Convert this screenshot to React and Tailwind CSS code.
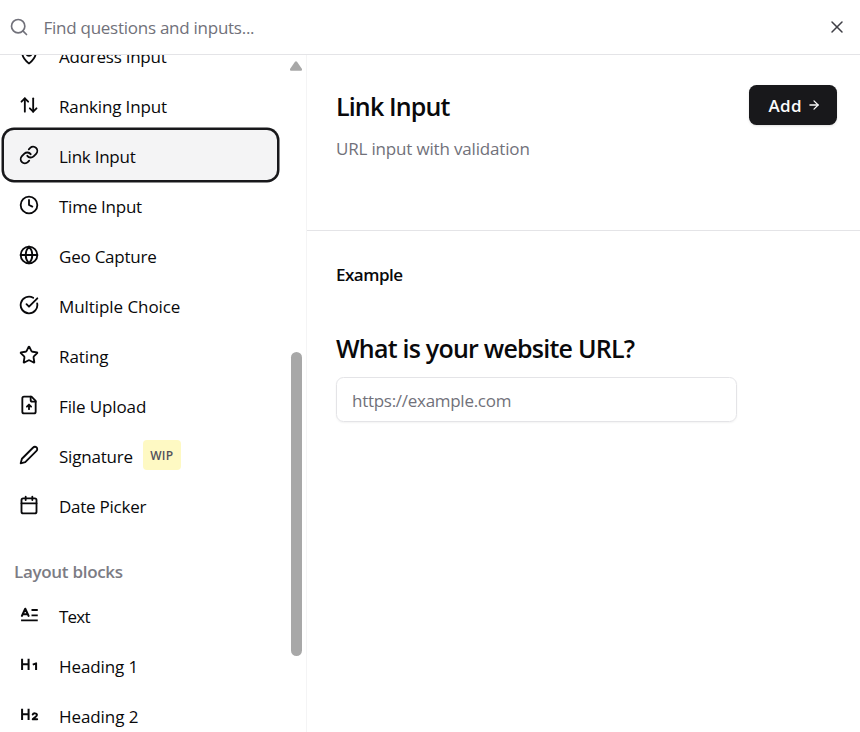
import React from "react";
import { ArrowRight, ArrowUpDown, Calendar, CircleCheckBig, Clock, Globe, Link, MapPin, Search, Star, X } from "lucide-react";

const Svg = ({ children, className, strokeWidth = 2.2 }) => (
  <svg viewBox="0 0 24 24" fill="none" stroke="currentColor" strokeWidth={strokeWidth} strokeLinecap="round" strokeLinejoin="round" className={className}>
    {children}
  </svg>
);

const FileUpIcon = ({ className }) => (
  <Svg className={className}>
    <path d="M15 2H6a2 2 0 0 0-2 2v16a2 2 0 0 0 2 2h12a2 2 0 0 0 2-2V7Z" />
    <path d="M14 2v4a2 2 0 0 0 2 2h4" />
    <path d="M12 17v-5M9.5 14 12 11.5l2.500 2.500" />
  </Svg>
);

const PencilIcon = ({ className }) => (
  <Svg className={className}>
    <path d="M17 3a2.830 2.830 0 1 1 4 4L7.500 20.500 2 22l1.500-5.500Z" />
  </Svg>
);

const TextIcon = ({ className }) => (
  <Svg className={className} strokeWidth={2.5}>
    <path d="m3.500 13 4-8.500 4 8.500M5 11h5" />
    <path strokeLinecap="butt" strokeWidth="2.200" d="M15 6H22.500M15 12.500H22.500M2.500 18.500h20" />
  </Svg>
);

const HeadingIcon = ({ className, children }) => (
  <Svg className={className} strokeWidth={2.4}>
    <path strokeLinecap="butt" d="M3.700 4.500v13.500M11.500 4.500v13.500M3.700 11.200h8" />
    {children}
  </Svg>
);

const H1Icon = ({ className }) => (
  <HeadingIcon className={className}>
    <path strokeLinecap="butt" d="m16.500 11.500 4-1.500V18" />
  </HeadingIcon>
);

const H2Icon = ({ className }) => (
  <HeadingIcon className={className}>
    <path d="M16.500 11.500c.6-2 5-2 5 .4 0 1.800-3 3-5 5.100h5.300" />
  </HeadingIcon>
);

const INPUTS = [
  { label: "Address Input", Icon: MapPin, text: "tracking-[-0.25px]" },
  { label: "Ranking Input", Icon: ArrowUpDown, text: "tracking-[-0.13px]" },
  { label: "Link Input", Icon: Link, text: "tracking-[-0.25px]", selected: true },
  { label: "Time Input", Icon: Clock, text: "tracking-[-0.25px]" },
  { label: "Geo Capture", Icon: Globe, text: "tracking-[-0.23px]" },
  { label: "Multiple Choice", Icon: CircleCheckBig, text: "tracking-[-0.07px]" },
  { label: "Rating", Icon: Star, text: "tracking-[-0.1px]" },
  { label: "File Upload", Icon: FileUpIcon, text: "tracking-[-0.12px]" },
  { label: "Signature", Icon: PencilIcon, text: "tracking-[-0.21px]", badge: "WIP" },
  { label: "Date Picker", Icon: Calendar, text: "tracking-[-0.25px]" },
];

const LAYOUT_BLOCKS = [
  { label: "Text", Icon: TextIcon, text: "tracking-[-0.8px]" },
  { label: "Heading 1", Icon: H1Icon, text: "tracking-[-0.1px]" },
  { label: "Heading 2", Icon: H2Icon, text: "tracking-[-0.08px]" },
];

const BlockItem = ({ label, Icon, text, badge, selected }) => (
  <li
    className={`flex h-[50px] items-center rounded-[10px] pl-[15px] ${
      selected ? "bg-[#f4f4f5] ring-[2.500px] ring-[#18181b]" : ""
    }`}
  >
    <Icon className="h-5 w-5 shrink-0" strokeWidth={2.2} />
    <span className={`ml-5 whitespace-nowrap pt-1 text-[17px] ${text}`}>{label}</span>
    {badge ? (
      <span className="ml-2.5 grid h-[30px] w-[38px] place-items-center rounded bg-[#fef9c3] pt-[2px] text-[12px] font-semibold tracking-[0.2px] text-[#52525b]">{badge}</span>
    ) : null}
  </li>
);

const App = () => (
  <div className="flex h-[732px] w-[860px] flex-col overflow-hidden bg-white font-['Open_Sans','Noto_Sans',sans-serif] text-[#09090b]">
    <header className="flex h-[55px] shrink-0 items-center border-b border-[#e4e4e7] pl-[8.500px] pr-[13.500px]">
      <Search className="h-5 w-5 text-[#71717a]" strokeWidth={2} />
      <input
        placeholder="Find questions and inputs..."
        className="ml-[15px] flex-1 pt-[2px] text-[17px] tracking-[-0.26px] outline-none placeholder:text-[#71717a]"
      />
      <button type="button" aria-label="Close">
        <X className="h-5 w-5 text-[#3f3f46]" strokeWidth={1.8} />
      </button>
    </header>

    <div className="flex min-h-0 flex-1">
      <aside className="flex w-[307px] shrink-0 justify-between overflow-hidden border-r border-[#f4f4f5]">
        <div className="-mt-[25px] w-[277px] shrink-0 pl-[4px]">
          <ul>
            {INPUTS.map((item) => (
              <BlockItem key={item.label} {...item} />
            ))}
          </ul>
          <h3 className="mt-[21px] flex h-[39px] items-center pl-[10px] pt-[2px] text-[17px] font-semibold text-[#7c7c84]">
            <span className="tracking-[-0.3px]">Layout blocks</span>
          </h3>
          <ul>
            {LAYOUT_BLOCKS.map((item) => (
              <BlockItem key={item.label} {...item} />
            ))}
          </ul>
        </div>
        <div className="flex w-4 shrink-0 flex-col items-start pt-[6px]">
          <svg viewBox="0 0 12 10" className="h-[10px] w-3 fill-[#a8a8a8]">
            <path d="M5 .8a1.300 1.300 0 0 1 2 0l5 7.200c.5.900 0 1.700-1 1.700H1C0 9.700-.5 8.900 0 8Z" />
          </svg>
          <div className="mt-[281px] ml-[1px] h-[304px] w-[10.500px] rounded-full bg-[#a8a8a8]" />
        </div>
      </aside>

      <main className="flex-1">
        <section className="flex h-44 items-start justify-between border-b border-[#e4e4e7] pl-[29px] pr-[23.500px] pt-[30px]">
          <div>
            <h2 className="mt-[2px] text-[25px] font-semibold leading-[38px]">
              <span className="tracking-[-0.85px]">Link Input</span>
            </h2>
            <p className="mt-[10px] text-[17px] leading-7 text-[#71717a]">
              <span className="tracking-[-0.17px]">URL input with validation</span>
            </p>
          </div>
          <button type="button" className="flex h-10 w-[88px] items-center rounded-[7.500px] bg-[#18181b] pl-[20px] text-[17px] font-semibold text-[#fafafa] shadow-sm">
            <span className="pt-[2px] tracking-[0.3px]">Add</span>
            <ArrowRight className="ml-[5px] h-[14px] w-[14px]" strokeWidth={2.2} />
          </button>
        </section>
        <section className="pl-[29px] pt-[30px]">
          <h4 className="text-[17px] font-semibold leading-7">
            <span className="tracking-[-0.5px]">Example</span>
          </h4>
          <h3 className="mt-[40px] text-[25px] font-semibold leading-[38px]">
            <span className="tracking-[-0.77px]">What is your website URL?</span>
          </h3>
          <input
            placeholder="https://example.com"
            className="mt-[10px] block h-[45px] w-[401px] rounded-[7.500px] border border-[#e4e4e7] px-[15px] pt-[2px] text-[17px] tracking-[-0.28px] shadow-xs outline-none placeholder:text-[#71717a]"
          />
        </section>
      </main>
    </div>
  </div>
);

export default App;
